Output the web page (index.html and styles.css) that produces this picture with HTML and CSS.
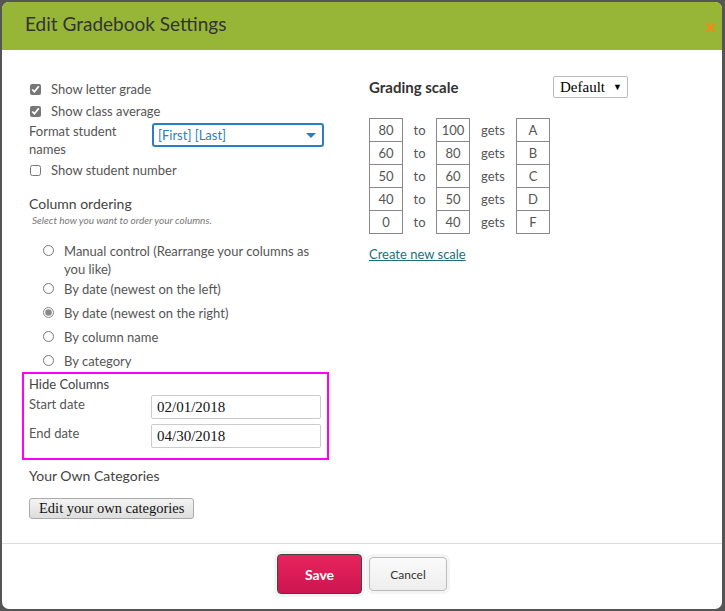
FILE: index.html
```html
<!DOCTYPE html>
<html>
<head>
    <title>Edit Gradebook Settings</title>
    <link rel="stylesheet" href="styles.css">
</head>
<body>
    <div class="modal">
        <div class="modal-header">
            <h2>Edit Gradebook Settings</h2>
            <svg class="close" width="9" height="9" viewBox="0 0 9 9">
                <path d="M1 1 L8 8 M8 1 L1 8" stroke="#f08a14" stroke-width="2.4" stroke-linecap="round"/>
            </svg>
        </div>
        <div class="modal-body">
            <div class="col-left">
                <label class="check"><input type="checkbox" checked> Show letter grade</label>
                <label class="check"><input type="checkbox" checked> Show class average</label>
                <div class="field-row">
                    <span class="field-label">Format student names</span>
                    <div class="name-select">
                        <span>[First] [Last]</span>
                        <span class="caret"></span>
                    </div>
                </div>
                <label class="check"><input type="checkbox"> Show student number</label>

                <h4 class="section-title">Column ordering</h4>
                <p class="hint">Select how you want to order your columns.</p>
                <div class="radios">
                    <label class="radio first"><input type="radio" name="order"> <span>Manual control (Rearrange your columns as you like)</span></label>
                    <label class="radio"><input type="radio" name="order"> <span>By date (newest on the left)</span></label>
                    <label class="radio"><input type="radio" name="order" checked> <span>By date (newest on the right)</span></label>
                    <label class="radio"><input type="radio" name="order"> <span>By column name</span></label>
                    <label class="radio"><input type="radio" name="order"> <span>By category</span></label>
                </div>

                <div class="hide-box">
                    <div class="box-title">Hide Columns</div>
                    <div class="date-row">
                        <span class="field-label">Start date</span>
                        <input class="date-input" type="text" value="02/01/2018">
                    </div>
                    <div class="date-row">
                        <span class="field-label">End date</span>
                        <input class="date-input" type="text" value="04/30/2018">
                    </div>
                </div>

                <div class="own-title">Your Own Categories</div>
                <button class="plain-btn">Edit your own categories</button>
            </div>

            <div class="col-right">
                <div class="scale-head">
                    <h3>Grading scale</h3>
                    <div class="scale-select">Default <span>&#9660;</span></div>
                </div>
                <table class="scale">
                    <tr><td class="box">80</td><td>to</td><td class="box">100</td><td>gets</td><td class="box letter">A</td></tr>
                    <tr><td class="box">60</td><td>to</td><td class="box">80</td><td>gets</td><td class="box letter">B</td></tr>
                    <tr><td class="box">50</td><td>to</td><td class="box">60</td><td>gets</td><td class="box letter">C</td></tr>
                    <tr><td class="box">40</td><td>to</td><td class="box">50</td><td>gets</td><td class="box letter">D</td></tr>
                    <tr><td class="box">0</td><td>to</td><td class="box">40</td><td>gets</td><td class="box letter">F</td></tr>
                </table>
                <a class="new-scale" href="#">Create new scale</a>
            </div>
        </div>
        <div class="modal-footer">
            <button class="save-btn">Save</button>
            <button class="cancel-btn">Cancel</button>
        </div>
    </div>
</body>
</html>
```

FILE: styles.css
```css
body {
    margin: 0;
    background-color: #555;
    font-family: Lato, "Open Sans", sans-serif;
    color: #555;
    font-size: 13px;
}
.modal {
    margin: 2px 3px 0 2px;
    height: 607px;
    background-color: white;
    border-radius: 7px;
    overflow: hidden;
    display: flex;
    flex-direction: column;
}
.modal-header {
    background-color: #97b536;
    height: 48px;
    display: flex;
    align-items: center;
    justify-content: space-between;
    padding: 0 7px 0 23px;
}
.modal-header h2 {
    margin: 0;
    font-weight: normal;
    font-size: 19px;
    color: #333;
    padding-bottom: 6px;
}
.close {
    margin-top: 2px;
}
.modal-body {
    flex: 1;
    display: flex;
    padding: 28px 0 0 27px;
}
.col-left {
    width: 301px;
}
.col-right {
    padding-left: 39px;
}
.check {
    display: flex;
    align-items: center;
    height: 22px;
}
.check input {
    margin: 0 10px 0 1px;
    width: 11px;
    height: 11px;
    accent-color: #777;
}
.field-row {
    display: flex;
    justify-content: space-between;
    align-items: flex-start;
    margin-bottom: 1px;
}
.field-label {
    width: 100px;
    line-height: 18px;
}
.name-select {
    width: 158px;
    height: 20px;
    border: 2px solid #2a7fc1;
    border-radius: 3px;
    color: #2a7fc1;
    display: flex;
    align-items: center;
    justify-content: space-between;
    padding: 0 6px 0 4px;
    margin: 1px 6px 0 0;
}
.caret {
    border-left: 5px solid transparent;
    border-right: 5px solid transparent;
    border-top: 5px solid #2a7fc1;
}
.section-title {
    margin: 14px 0 0;
    font-weight: normal;
    font-size: 14px;
    color: #444;
}
.hint {
    margin: 2px 0 16px 3px;
    font-size: 10px;
    font-style: italic;
    color: #777;
}
.radio {
    display: flex;
    align-items: flex-start;
    padding-left: 14px;
    line-height: 18px;
    margin-bottom: 6px;
}
.radio.first {
    margin-bottom: 2px;
}
.radio input {
    margin: 3px 10px 0 0;
    width: 11px;
    height: 11px;
    accent-color: #888;
}
.radio span {
    width: 260px;
}
.hide-box {
    border: 2px solid #f0f;
    margin: -4px 0 0 -7px;
    width: 292px;
    padding: 1px 6px 10px 5px;
}
.box-title {
    color: #444;
    line-height: 18px;
}
.date-row {
    display: flex;
    justify-content: space-between;
    align-items: flex-start;
    margin-top: 2px;
}
.date-row + .date-row {
    margin-top: 5px;
}
.date-input {
    width: 158px;
    height: 22px;
    border: 1px solid #ccc;
    border-radius: 2px;
    font-family: "Liberation Serif", serif;
    font-size: 15px;
    color: #111;
    padding: 0 5px;
}
.own-title {
    margin-top: 7px;
    color: #444;
    font-size: 14px;
}
.plain-btn {
    margin-top: 14px;
    font-family: "Liberation Serif", serif;
    font-size: 14.5px;
    color: #111;
    background: linear-gradient(#f4f4f4, #ddd);
    border: 1px solid #aaa;
    border-radius: 3px;
    height: 21px;
    padding: 0 9px;
}
.scale-head {
    display: flex;
    align-items: center;
    justify-content: space-between;
    width: 259px;
    margin-top: -2px;
}
.scale-head h3 {
    margin: 0;
    font-size: 15px;
    color: #333;
}
.scale-select {
    width: 67px;
    height: 20px;
    border: 1px solid #bbb;
    border-radius: 2px;
    font-family: "Liberation Serif", serif;
    font-size: 15px;
    color: #000;
    padding: 0 0 0 6px;
    display: flex;
    align-items: center;
    justify-content: space-between;
}
.scale-select span {
    font-size: 9px;
    margin-right: 5px;
}
.scale {
    border-collapse: collapse;
    margin-top: 20px;
    text-align: center;
}
.scale td {
    height: 22px;
    padding: 0;
    width: 33px;
}
.scale td.box {
    border: 1px solid #888;
    width: 32px;
}
.scale td:nth-child(4) {
    width: 46px;
}
.new-scale {
    display: block;
    margin-top: 12px;
    color: #1d6f7a;
}
.modal-footer {
    height: 66px;
    border-top: 1px solid #ddd;
    display: flex;
    justify-content: center;
    align-items: center;
    gap: 7px;
    padding: 0 0 5px 0;
    box-sizing: border-box;
}
.save-btn {
    width: 85px;
    height: 40px;
    background: linear-gradient(#e8245d, #cc1550);
    border: 1px solid #444;
    border-radius: 4px;
    color: white;
    font-family: Lato, sans-serif;
    font-weight: bold;
    font-size: 14px;
    box-shadow: 0 0 0 3px #f4f4f4;
}
.cancel-btn {
    width: 78px;
    height: 34px;
    background: linear-gradient(#fafafa, #eee);
    border: 1px solid #bbb;
    border-radius: 4px;
    color: #333;
    font-family: Lato, sans-serif;
    font-size: 12px;
    box-shadow: 0 0 0 3px #f4f4f4;
}
```
